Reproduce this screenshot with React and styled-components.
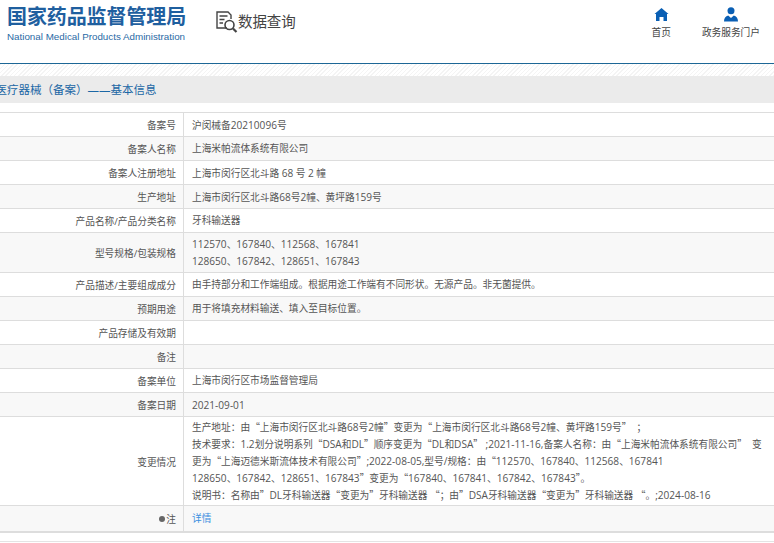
import React from "react"
import styled, { createGlobalStyle } from "styled-components"

const Global = createGlobalStyle`
  html, body { margin: 0; padding: 0; background: #fff; overflow: hidden; }
  body { font-family: "Open Sans", "Noto Sans CJK SC", sans-serif; }
`
const Page = styled.div`
  width: 774px;
  height: 543px;
  overflow: hidden;
`
const Header = styled.header`
  display: flex;
  align-items: flex-start;
  height: 63px;
  border-bottom: 1px solid #1d6796;
  box-sizing: content-box;
`
const Logo = styled.div`
  width: 215px;
  padding: 5px 0 0 7px;
  box-sizing: border-box;
`
const LogoTitle = styled.div`
  font-family: "Noto Sans CJK SC", sans-serif;
  font-size: 20px;
  line-height: 22px;
  font-weight: 700;
  letter-spacing: -0.1px;
  color: #1f5f9f;
  white-space: nowrap;
`
const LogoSub = styled.div`
  font-family: "Liberation Sans", sans-serif;
  font-size: 9.8px;
  line-height: 12px;
  margin-top: 4px;
  color: #2a6aa5;
  white-space: nowrap;
`
const Query = styled.div`
  display: flex;
  align-items: center;
  margin-top: 10px;
  color: #444;
  font-size: 14.5px;
  line-height: 22px;
  letter-spacing: -0.1px;
`
const Nav = styled.nav`
  display: flex;
  margin-left: auto;
  padding: 7px 14px 0 0;
  gap: 31px;
`
const NavItem = styled.div`
  display: flex;
  flex-direction: column;
  align-items: center;
  color: #444;
  font-size: 9.7px;
  line-height: 14px;
  gap: 4px;
`
const Hatch = styled.div`
  height: 12px;
  background: repeating-linear-gradient(135deg, #f4f4f4 0 1px, #fff 1px 3px);
`
const Band = styled.div`
  height: 27px;
  line-height: 27px;
  background: #ebebeb;
  color: #1b67a5;
  font-size: 11.5px;
  text-indent: -4.5px;
  white-space: nowrap;
  margin-bottom: 9px;
`
const Table = styled.div`
  border-top: 1px solid #ddd;
`
const Row = styled.div`
  display: grid;
  grid-template-columns: 184px 1fr;
  min-height: ${(p) => p.$h - 1}px;
  background: ${(p) => (p.$alt ? "#f8f8f8" : "#fff")};
  border-bottom: ${(p) => (p.$last ? "2px solid #ddd" : "1px solid #ddd")};
`
const Label = styled.div`
  display: flex;
  align-items: center;
  justify-content: flex-end;
  padding: 1px 7px 0 0;
  border-right: 1px solid #ddd;
  font-size: 9.7px;
  color: #555;
  white-space: nowrap;
`
const Value = styled.div`
  display: flex;
  flex-direction: column;
  justify-content: center;
  padding: 1px 0 0 8px;
  font-size: 9.7px;
  line-height: ${(p) => p.$lh || 16}px;
  color: #555;
  white-space: nowrap;
  overflow: hidden;
`
const Line = styled.div`
  white-space: pre;
`
const Latin = styled.span`
  font-size: 10.1px;
`
const Quote = styled.span`
  font-family: "Noto Sans CJK SC", sans-serif;
`
const Link = styled.span`
  color: #3b8fe0;
`
const Dot = styled.span`
  display: inline-block;
  width: 6px;
  height: 6px;
  border-radius: 50%;
  background: #666;
  margin-right: 1px;
`
const Footer = styled.div`
  margin-top: 8px;
  border-top: 1px solid #e4e4e4;
`

const rows = [
  { h: 24, label: "备案号", lines: ["沪闵械备20210096号"] },
  { h: 24, label: "备案人名称", lines: ["上海米帕流体系统有限公司"] },
  { h: 24, label: "备案人注册地址", lines: ["上海市闵行区北斗路 68 号 2 幢"] },
  { h: 24, label: "生产地址", lines: ["上海市闵行区北斗路68号2幢、黄坪路159号"] },
  { h: 24, label: "产品名称/产品分类名称", lines: ["牙科输送器"] },
  { h: 40, label: "型号规格/包装规格", lines: ["112570、167840、112568、167841", "128650、167842、128651、167843"] },
  { h: 24, label: "产品描述/主要组成成分", lines: ["由手持部分和工作端组成。根据用途工作端有不同形状。无源产品。非无菌提供。"] },
  { h: 24, label: "预期用途", lines: ["用于将填充材料输送、填入至目标位置。"] },
  { h: 24, label: "产品存储及有效期", lines: [""] },
  { h: 24, label: "备注", lines: [""] },
  { h: 24, label: "备案单位", lines: ["上海市闵行区市场监督管理局"] },
  { h: 24, label: "备案日期", lines: ["2021-09-01"] },
  {
    h: 89,
    lh: 16,
    label: "变更情况",
    lines: [
      "生产地址：由“上海市闵行区北斗路68号2幢”变更为“上海市闵行区北斗路68号2幢、黄坪路159号”  ；",
      "技术要求：1.2划分说明系列“DSA和DL”顺序变更为“DL和DSA” ;2021-11-16,备案人名称：由“上海米帕流体系统有限公司”  变",
      "更为“上海迈德米斯流体技术有限公司”;2022-08-05,型号/规格：由“112570、167840、112568、167841",
      "128650、167842、128651、167843”变更为“167840、167841、167842、167843”。",
      "说明书：名称由”DL牙科输送器“变更为”牙科输送器 “；由”DSA牙科输送器“变更为”牙科输送器 “。;2024-08-16",
    ],
  },
]

// latin runs sit a touch larger than the CJK, quotes stay full width
const withLatin = (text) =>
  text.split(/([0-9A-Za-z.,;\-/]+|[“”])/).map((part, i) => {
    if (i % 2 === 0) return part
    return /[“”]/.test(part) ? <Quote key={i}>{part}</Quote> : <Latin key={i}>{part}</Latin>
  })

function App() {
  return (
    <Page>
      <Global />
      <Header>
        <Logo>
          <LogoTitle>国家药品监督管理局</LogoTitle>
          <LogoSub>National Medical Products Administration</LogoSub>
        </Logo>
        <Query>
          <svg width="23" height="24" viewBox="0 0 23 24" fill="none" stroke="#444" strokeWidth="1.4">
            <path d="M12 18H2V2h11l3 3v4" />
            <path d="M4.5 6h8M4.5 9.5h5M4.5 13h3.5" />
            <circle cx="14.5" cy="15" r="4.5" strokeWidth="1.6" />
            <path d="M18 18.5l3.5 3.5" strokeWidth="2.2" />
          </svg>
          数据查询
        </Query>
        <Nav>
          <NavItem>
            <svg width="15" height="15" viewBox="0 0 15 15" fill="#0a5fb4">
              <path d="M7.5 1L14.5 7H13v7H9.5V10h-4v4H2V7H.5z" />
            </svg>
            首页
          </NavItem>
          <NavItem>
            <svg width="16" height="15" viewBox="0 0 16 15" fill="#0a5fb4">
              <circle cx="8" cy="3.8" r="3.5" />
              <path d="M1 14.5c0-3.4 1.6-5.2 4.2-6L8 11l2.8-2.5c2.6.8 4.2 2.6 4.2 6z" />
            </svg>
            政务服务门户
          </NavItem>
        </Nav>
      </Header>
      <Hatch />
      <Band>医疗器械（备案）——基本信息</Band>
      <Table>
        {rows.map((r, i) => (
          <Row key={r.label} $h={r.h} $alt={i % 2 === 1}>
            <Label>{r.label}</Label>
            <Value $lh={r.lh}>
              {r.lines.map((l, j) => (
                <Line key={j}>{withLatin(l)}</Line>
              ))}
            </Value>
          </Row>
        ))}
        <Row $h={26} $alt $last>
          <Label>
            <Dot />注
          </Label>
          <Value>
            <Link>详情</Link>
          </Value>
        </Row>
      </Table>
      <Footer />
    </Page>
  )
}

export default App
